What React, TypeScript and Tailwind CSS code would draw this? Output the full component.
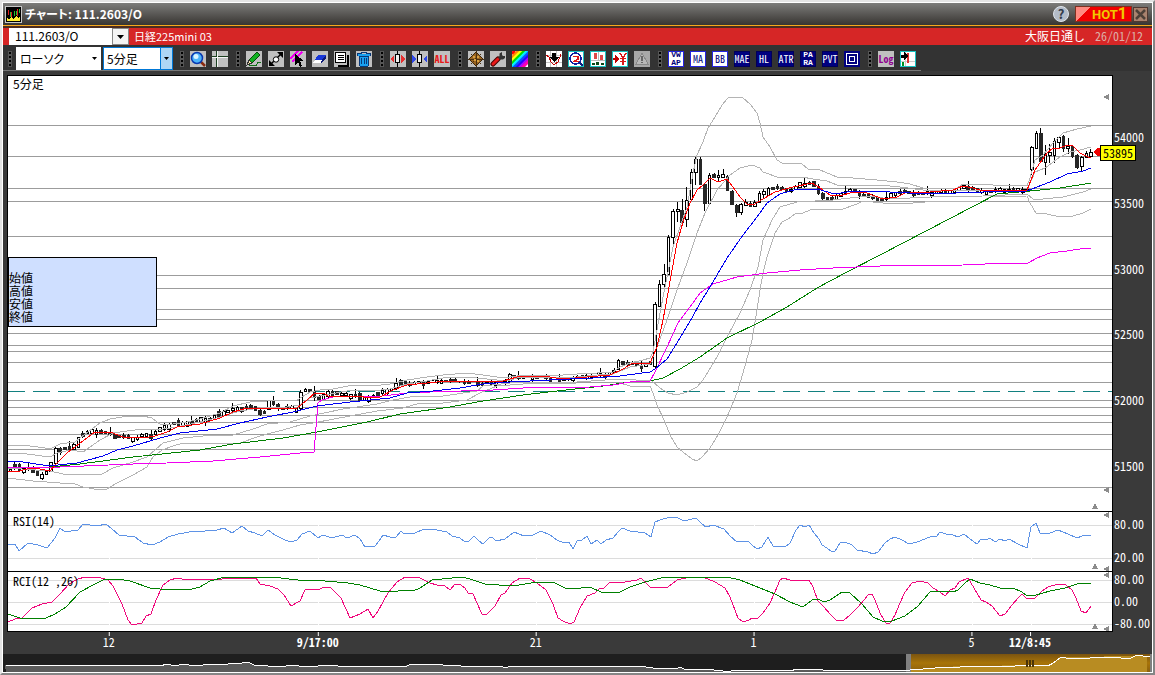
import type { ReactNode } from "react";

const GRID_LEVELS = [125, 156, 188, 201, 236, 275, 288, 309, 319, 333, 345, 351, 362, 382, 400, 407, 415, 422, 434, 449, 487];

const BAND_UPPER_2 =
  "8,445 23,445 45,448 52,448 60,444 67,443 75,442 80,438 88,432 100,423 110,419 122,417 143,416 152,418 160,424 173,424 187,422 200,419 220,413 233,406 250,402 267,401 283,400 297,400 302,397 310,392 320,390 333,389 353,385 373,386 390,384 407,380 427,377 443,375 467,373 483,375 497,377 510,377 517,376 543,375 563,375 577,374 597,373 613,372 620,367 630,363 643,360 650,358 653,352 660,313 665,287 673,247 680,227 687,207 693,173 697,155 703,142 708,128 715,117 722,105 728,98 735,97 743,98 750,104 757,113 760,123 763,137 770,147 777,160 782,163 802,164 808,169 820,170 837,177 853,178 877,180 897,182 910,184 923,188 957,188 963,184 993,185 1027,186 1030,178 1035,160 1043,155 1053,143 1063,133 1077,129 1091,126";
const BAND_UPPER_1 =
  "8,453 27,454 50,457 57,453 70,450 83,452 100,440 113,433 127,431 143,429 163,429 177,427 200,422 220,417 240,411 260,408 287,407 300,405 310,398 330,394 353,390 373,391 390,389 407,384 427,381 443,378 467,377 497,380 510,380 517,378 543,377 577,377 597,375 613,374 620,371 630,367 650,364 657,347 667,320 677,290 687,263 697,233 705,213 717,190 730,175 740,168 752,165 760,168 763,172 777,177 802,177 813,179 827,181 837,185 880,185 900,187 923,190 957,190 1027,190 1035,172 1045,168 1060,157 1070,152 1080,150 1091,147";
const BAND_LOWER_1 =
  "8,468 50,471 63,474 102,474 113,468 133,462 147,457 155,450 163,443 183,438 203,436 233,435 253,429 267,424 290,422 310,416 343,409 377,404 393,400 410,397 443,396 477,391 483,386 510,383 577,382 620,379 652,381 660,388 668,393 677,395 687,392 697,387 703,380 717,357 727,337 740,313 750,290 758,267 763,240 772,220 780,207 797,202 833,200 850,198 870,196 890,199 930,197 983,196 1027,194 1033,199 1043,199 1063,197 1083,192 1091,189";
const BAND_LOWER_2 =
  "8,478 33,481 60,483 75,484 83,487 100,490 107,489 117,483 133,475 147,467 153,457 162,450 173,446 183,443 200,443 220,444 240,443 257,437 267,434 283,430 300,425 313,423 350,416 377,411 403,408 420,403 443,403 467,400 480,393 497,386 523,384 577,383 620,383 630,386 650,386 653,393 657,405 665,422 670,435 677,447 683,452 692,459 697,461 702,457 710,448 718,435 727,417 737,393 743,373 752,340 757,310 760,290 763,273 767,257 775,233 782,222 788,219 795,214 803,213 810,210 843,209 857,204 863,201 883,203 913,203 937,201 983,201 990,197 1027,196 1030,203 1036,213 1047,214 1060,217 1073,216 1083,213 1091,209";
const MA_MID =
  "8,461 23,462 43,465 58,465 77,463 103,456 117,450 133,446 160,438 180,433 217,429 240,423 267,417 293,412 317,406 350,402 390,398 407,393 433,391 460,388 483,384 510,382 570,379 593,378 620,376 650,372 655,369 667,359 680,338 692,318 700,303 710,287 727,258 743,235 757,217 767,203 780,194 797,189 817,189 835,194 853,191 880,191 890,192 930,194 983,192 1027,191 1037,187 1050,182 1067,174 1083,171 1091,168";
const MA_LONG =
  "8,467 50,467 80,464 133,457 200,450 233,444 283,438 317,432 367,422 400,414 450,407 483,401 523,395 557,391 603,386 630,382 650,381 663,378 680,369 700,357 727,338 760,322 787,307 817,288 847,272 880,255 997,194 1030,191 1060,188 1091,183";
const VWAP =
  "8,467 60,467 133,464 167,463 213,461 260,457 300,453 314,452 318,403 322,400 333,397 383,396 407,393 430,392 493,390 523,388 590,387 613,385 630,382 650,381 655,372 667,347 678,323 690,307 700,293 713,284 737,277 767,273 800,270 833,268 880,266 963,265 1008,263 1028,263 1037,258 1050,253 1067,251 1080,249 1091,248";
const MA_SHORT =
  "8,472 20,471 30,468 40,469 50,471 57,463 67,453 75,447 87,438 95,432 110,432 123,437 143,438 155,436 167,432 177,427 200,424 220,418 233,412 247,408 267,409 297,408 307,400 315,393 323,393 330,397 357,396 370,398 380,397 393,390 407,385 417,384 437,382 453,381 503,381 517,377 543,376 563,379 587,377 610,375 623,369 633,363 650,363 657,347 663,320 668,293 672,270 677,243 683,222 690,203 697,190 703,185 710,178 718,182 727,179 733,187 740,197 747,204 753,205 763,199 775,192 793,187 812,183 820,188 830,195 840,196 853,192 867,193 883,199 897,197 907,192 930,192 953,190 963,186 973,188 983,191 1027,190 1035,170 1047,153 1053,148 1060,148 1067,145 1073,146 1080,153 1088,157 1091,157";

const RSI_LINE =
  "8,544 15,544 19,551 28,543 38,545 47,548 55,538 60,528 65,532 78,530 83,524 97,526 106,524 112,529 119,535 135,537 143,543 152,545 160,542 168,537 178,534 195,531 205,531 217,530 224,528 232,533 242,526 248,531 255,533 262,536 268,530 275,535 285,540 291,542 297,540 302,534 310,531 318,538 323,535 332,538 342,535 347,538 355,535 360,539 365,547 375,546 379,541 383,535 390,537 396,537 401,531 404,534 415,533 424,529 437,530 447,532 452,536 460,538 465,542 469,541 474,536 479,541 483,544 489,538 492,537 496,541 505,539 514,532 524,536 533,535 541,531 550,535 557,540 564,543 569,542 573,549 577,541 582,540 587,536 591,544 597,540 601,544 606,540 613,538 619,531 622,528 630,531 645,533 651,537 655,522 660,520 670,517 678,518 684,521 696,518 702,524 706,527 713,525 724,529 730,536 737,542 742,541 748,541 752,545 757,549 762,547 768,537 773,546 785,547 790,543 796,530 800,525 805,527 809,525 814,533 819,539 822,545 827,548 831,551 835,551 840,543 845,542 852,545 857,550 868,552 873,554 878,552 885,543 890,539 895,537 902,540 909,544 917,542 925,539 932,536 936,537 940,532 946,534 953,535 958,537 964,534 970,539 977,544 981,539 986,540 990,538 995,542 1000,539 1005,541 1009,539 1018,544 1027,548 1031,527 1036,523 1040,533 1050,533 1058,530 1068,534 1077,538 1082,536 1091,535";
const RCI_SHORT =
  "8,622 15,619 22,618 32,608 42,604 52,602 60,594 69,584 78,579 85,577 98,577 108,580 113,586 122,604 128,620 132,625 142,623 146,616 151,614 156,600 163,585 170,580 177,578 182,579 222,579 250,578 256,578 260,584 270,586 278,589 284,595 291,606 300,601 305,590 310,589 320,589 324,587 331,588 341,598 350,618 360,614 368,609 373,618 378,611 388,593 397,582 405,577 420,578 430,583 437,585 445,586 450,590 455,584 461,585 465,588 468,593 473,594 477,603 482,614 487,614 495,606 501,595 505,593 512,583 520,578 530,579 537,583 546,590 553,604 558,618 563,621 570,624 574,622 580,608 587,596 595,593 599,589 604,588 610,582 625,582 637,580 641,578 646,583 650,587 668,587 677,580 690,577 703,577 715,582 725,588 730,597 738,618 743,622 749,620 752,618 758,618 763,613 770,603 775,592 780,580 783,578 790,580 809,580 813,587 818,601 824,607 830,614 836,620 844,620 850,615 858,607 865,599 868,595 872,594 875,600 880,613 886,623 890,623 895,615 900,603 905,592 912,583 920,581 928,583 933,588 940,592 945,596 950,590 955,588 959,582 968,578 974,588 981,600 986,602 992,606 1000,616 1005,614 1012,605 1018,598 1022,594 1027,599 1035,598 1042,591 1048,587 1058,584 1066,585 1072,590 1076,598 1081,611 1086,613 1091,606";
const RCI_LONG =
  "8,614 20,618 44,619 55,614 66,607 80,592 95,584 105,579 118,579 130,581 150,588 160,589 192,589 200,587 210,581 225,577 272,577 298,580 325,581 348,583 360,585 380,591 398,591 405,590 413,591 420,588 432,580 462,577 470,579 485,584 513,586 525,584 537,582 553,582 565,588 573,589 590,587 603,593 620,592 630,587 645,582 665,577 727,577 740,580 760,588 775,594 790,602 803,607 812,600 818,599 824,602 830,600 842,592 850,593 862,604 873,617 882,621 892,621 905,616 918,606 930,592 935,591 953,592 958,590 965,583 970,579 980,583 990,585 1000,588 1013,588 1022,592 1027,596 1036,595 1050,591 1065,588 1080,583 1091,583";
const NAV_LINE =
  "5,665 160,665 166,664 175,665 182,664 195,665 210,664 220,664 235,663 248,662 255,665 280,666 292,665 305,666 330,665 345,666 405,666 410,664 435,664 450,665 470,666 500,666 505,667 510,666 640,666 650,667 655,668 675,668 680,667 685,669 710,669 716,670 728,671 733,670 790,670 796,669 820,669 825,670 905,670 915,669 930,668 940,667 955,667 965,666 990,666 1040,665 1048,665 1052,663 1060,657 1070,658 1110,657 1130,658 1135,655 1150,656";

/* Typical price path for the quiet stretches: [x, y]. */
const QUIET_PATH: [number, number][] = [
  [10, 469], [15, 466], [20, 470], [25, 467], [32, 471], [38, 475], [42, 474], [48, 470], [52, 462], [56, 449], [62, 447], [70, 449],
  [75, 445], [79, 436], [85, 432], [90, 433], [95, 428], [100, 433], [112, 434], [120, 437], [130, 438], [140, 436], [150, 435],
  [157, 430], [165, 427], [173, 421], [180, 426], [187, 421], [195, 422], [203, 418], [212, 419], [218, 414], [226, 410], [235, 410],
  [243, 406], [250, 407], [258, 411], [264, 412], [268, 402], [274, 404], [281, 408], [297, 408], [301, 391], [312, 391], [318, 400],
  [325, 395], [333, 391], [338, 395], [355, 394], [360, 400], [366, 398], [374, 395], [380, 393], [388, 389], [393, 388], [401, 381],
  [410, 384], [420, 382], [448, 380], [480, 383], [505, 382], [509, 375], [520, 377], [540, 376], [555, 380], [570, 379], [585, 375],
  [605, 374], [614, 371], [618, 361], [625, 362], [632, 364], [640, 365], [650, 363], [769, 187], [782, 188], [787, 190], [795, 188],
  [800, 183], [812, 182], [816, 190], [822, 197], [832, 199], [842, 192], [850, 190], [860, 194], [870, 197], [885, 199], [893, 193],
  [900, 191], [920, 193], [940, 191], [955, 190], [963, 186], [970, 187], [977, 192], [985, 191], [1000, 189], [1028, 189],
];

/* Candles of the busy stretches: [high, bodyTop, bodyBottom, low, falling]. */
type Bar = [number, number, number, number, 0 | 1];
const RALLY: Bar[] = [
  [302, 304, 366, 369, 0], [280, 284, 306, 307, 0], [264, 274, 284, 288, 0], [235, 237, 274, 275, 0], [209, 211, 237, 247, 0],
  [202, 209, 211, 222, 0], [199, 210, 222, 225, 1], [187, 200, 219, 227, 0], [169, 172, 199, 200, 0], [157, 159, 172, 185, 0],
  [157, 159, 184, 185, 1], [184, 184, 203, 211, 1], [173, 175, 203, 204, 0], [173, 174, 177, 178, 1], [170, 175, 177, 182, 0],
  [169, 174, 177, 178, 0], [175, 176, 190, 191, 1], [190, 191, 204, 205, 1], [204, 205, 212, 217, 1], [203, 204, 212, 215, 0],
  [199, 202, 205, 206, 0], [201, 203, 206, 207, 1], [200, 202, 206, 207, 0], [191, 193, 202, 203, 0], [189, 191, 194, 198, 0],
];
const LATEST: Bar[] = [
  [146, 147, 169, 175, 0], [131, 133, 148, 149, 0], [128, 133, 161, 163, 1], [145, 153, 162, 175, 0], [144, 152, 155, 163, 0],
  [138, 141, 155, 163, 0], [136, 137, 142, 149, 0], [135, 136, 148, 152, 1], [138, 146, 148, 154, 0], [145, 146, 156, 158, 1],
  [154, 155, 167, 169, 1], [156, 157, 166, 171, 0], [151, 153, 157, 158, 0], [149, 152, 156, 157, 0],
];

const centerOf = (i: number) => 655 + 4.54 * (i - 142);

function quietLevel(x: number) {
  const next = QUIET_PATH.findIndex((p) => p[0] >= x);
  if (next <= 0) return QUIET_PATH[0][1];
  const [x0, y0] = QUIET_PATH[next - 1];
  const [x1, y1] = QUIET_PATH[next];
  return y0 + ((y1 - y0) * (x - x0)) / (x1 - x0);
}

function barAt(i: number): Bar {
  if (i >= 142 && i < 142 + RALLY.length) return RALLY[i - 142];
  if (i >= 225) return LATEST[i - 225];
  const x = centerOf(i);
  const from = quietLevel(x - 4);
  const to = quietLevel(x);
  const spread = x > 400 ? 1 : 2;
  const wobble = (i * 7) % 4;
  const flat = x > 430 && x < 600 && i % 3 === 0;
  const top = Math.round(Math.min(from, to)) - (wobble > 1 ? spread : 0);
  const bottom = flat ? top : Math.max(Math.round(Math.max(from, to)), top + 2) + (wobble === 1 ? spread : 0);
  return [top - ((i * 5) % 3) - (i % 9 === 4 ? 3 : 0), top, bottom, bottom + ((i * 11) % 3) + (i % 8 === 3 ? 2 : 0), to > from || i % 5 === 1 ? 1 : 0];
}

const CANDLES = Array.from({ length: 239 }, (_, i) => {
  const center = centerOf(i);
  const left = Math.round(center - 1.8);
  return { wick: Math.floor(center), left, width: Math.round(center + 1.8) - left, bar: barAt(i) };
});

function Candles() {
  return (
    <g>
      {CANDLES.map(({ wick, left, width, bar: [high, top, bottom, low, falling] }) => (
        <g key={left}>
          <rect x={wick} y={high} width={1} height={Math.max(1, low - high)} fill="#000" />
          <rect x={left} y={top} width={width} height={bottom - top + 1} fill={falling ? "#262626" : "#000"} />
          {!falling && bottom - top > 1 && <rect x={left + 1} y={top + 1} width={width - 2} height={bottom - top - 1} fill="#fff" />}
        </g>
      ))}
    </g>
  );
}

function Curve({ points, color }: { points: string; color: string }) {
  return <polyline points={points} fill="none" stroke={color} strokeWidth={1} />;
}

function Marks({ left, up }: { left: number[]; up: number[] }) {
  return (
    <g fill="#8c8c8c">
      {left.map((y) => <path key={y} d={`M1103 ${y} l6 -3 v6z`} />)}
      {up.map((y) => <path key={y} d={`M1095 ${y - 3} l3 6 h-6z`} />)}
    </g>
  );
}

function Plot({ top, height, label, children }: { top: number; height: number; label: string; children: ReactNode }) {
  return (
    <svg
      role="img"
      aria-label={label}
      viewBox={`8 ${top} 1104 ${height}`}
      preserveAspectRatio="none"
      shapeRendering="crispEdges"
      className="block h-full w-full"
    >
      {children}
    </svg>
  );
}

const TICKS = [109, 318, 536, 754, 972, 1031];

function SubGrid({ levels, top, bottom }: { levels: number[]; top: number; bottom: number }) {
  return (
    <g>
      {levels.map((y) => <rect key={y} x={8} y={y} width={1104} height={1} fill="#dcdcdc" />)}
      {TICKS.map((x) => <rect key={x} x={x} y={top} width={1} height={bottom - top} fill="#fff" />)}
    </g>
  );
}

const iconBox = "mt-px flex size-4 shrink-0 items-center justify-center overflow-hidden";

function Tool({ label, tone = "bg-[#c0c0c0]", children }: { label: string; tone?: string; children: ReactNode }) {
  return (
    <button type="button" aria-label={label} className={`${iconBox} ${tone}`}>
      <svg viewBox="0 0 16 16" className="size-4 shrink-0" shapeRendering="crispEdges" aria-hidden="true">{children}</svg>
    </button>
  );
}

const light = "bg-white text-[#00007a] shadow-[inset_0_0_0_1px_#2424e0]";
const navy = "bg-[#000080] text-white shadow-[inset_0_0_0_1px_#000058]";
const cyan = "bg-white shadow-[inset_0_0_0_1px_#18c4c4]";

function TextTool({ lines, tone }: { lines: string[]; tone: string }) {
  const font =
    lines.length > 1
      ? 'font-["Liberation_Mono",monospace] text-[8px] font-bold leading-[8px]'
      : 'font-["Noto_Sans_Mono_CJK_JP","Liberation_Mono",monospace] text-[10px] leading-[16px]';
  return (
    <button type="button" className={`${iconBox} flex-col ${font} ${tone}`}>
      {lines.map((line) => <span key={line}>{line}</span>)}
    </button>
  );
}

function Grip() {
  return (
    <span className="ml-[3px] flex w-[3px] shrink-0 flex-col gap-[2px]" aria-hidden="true">
      {[0, 1, 2, 3].map((n) => <span key={n} className="size-[2px] bg-black outline outline-[#555]" />)}
    </span>
  );
}

function BarIcon({ color, inward }: { color: string; inward?: boolean }) {
  return (
    <g>
      <path d="M7.500 0v16" stroke="#000" />
      <rect x="5.500" y="3.500" width="4" height="8" fill="#f0f0f0" stroke="#000" />
      <path d={inward ? "M0 4l4 4l-4 4zM15 4l-4 4l4 4z" : "M4 4v8L0 8zM11 4v8l4-4z"} fill={color} />
    </g>
  );
}

function Toolbar() {
  return (
    <div role="toolbar" aria-label="チャートツール" className="flex h-[26px] items-center">
      <div className="flex h-[26px] items-center gap-[6px] border-b border-[#777] pl-[3px] pr-[5px] pt-[2px]">
        <Grip />
        <div className="-ml-[2px] -mr-px flex gap-[2px]">
          <div className="relative">
            <select aria-label="チャート種別" className="block h-[23px] w-[85px] appearance-none bg-white pl-1 text-[12px] text-black [font-feature-settings:'palt']">
              <option>ローソク</option>
            </select>
            <svg viewBox="0 0 5 3" className="pointer-events-none absolute right-1 top-[10px] h-[3px] w-[5px]" aria-hidden="true"><path d="M0 0h5L2.500 3z" /></svg>
          </div>
          <div className="relative">
            <select aria-label="足種" className="block h-[23px] w-[70px] appearance-none border border-[#0078d7] bg-white pl-[3px] text-[12px] text-black">
              <option>5分足</option>
            </select>
            <span className="pointer-events-none absolute right-0 top-0 flex h-[23px] w-[13px] items-center justify-center border border-[#0078d7] bg-[#add6f5]">
              <svg viewBox="0 0 5 3" className="h-[3px] w-[5px]" aria-hidden="true"><path d="M0 0h5L2.500 3z" /></svg>
            </span>
          </div>
        </div>
        <Grip />
        <Tool label="拡大">
          <g shapeRendering="auto">
            <path d="M10.500 10.500l4.500 4.500" stroke="#8a2a10" strokeWidth="2.500" />
            <circle cx="7" cy="7" r="5.500" fill="#4cb4fa" stroke="#0838b0" strokeWidth="1.500" />
            <circle cx="6" cy="5.500" r="2.500" fill="#d8f4ff" />
          </g>
        </Tool>
        <Tool label="十字線">
          <path d="M0 5.500h16M4.500 0v16" stroke="#1c4020" />
          <path d="M0 6.500h16M5.500 0v16" stroke="#f4f4f4" />
        </Tool>
        <Grip />
        <Tool label="ペン">
          <path d="M3 9l8-8l3 3l-8 8z" fill="#10b020" stroke="#064a0a" />
          <path d="M1 14l2-5l3 3z" fill="#ffe8b0" stroke="#333" />
          <path d="M3 14.500h7l2-3h3" fill="none" stroke="#107018" />
        </Tool>
        <Tool label="トレンドライン">
          <g shapeRendering="auto">
            <path d="M3 13L13 3" stroke="#000" strokeWidth="1.500" />
            <path d="M1 9v6h6zM9 1h6v6z" />
            <circle cx="8" cy="8.500" r="2.700" fill="#fff" stroke="#000" />
          </g>
        </Tool>
        <Tool label="平行線">
          <path d="M0 8L8 0M2 11L12 1" stroke="#f000f0" strokeWidth="1.500" />
          <path d="M5 3v11l3-3l2 5l2-1l-2-5h4z" fill="#000" />
        </Tool>
        <Tool label="消しゴム">
          <path d="M6 4h8l-4 5H3z" fill="#1838d8" />
          <path d="M3 9h7l-1 3H1z" fill="#fff" />
          <path d="M10 9l4-5v4l-5 4z" fill="#0a1878" />
        </Tool>
        <Tool label="複製">
          <path d="M13.500 4v10.500H4" fill="none" stroke="#000" strokeWidth="2" />
          <rect x="1.500" y="1.500" width="10" height="10" fill="#fff" stroke="#000" />
          <path d="M4 4.500h6M4 6.500h6M4 8.500h6" stroke="#000" />
        </Tool>
        <Tool label="削除">
          <path d="M3 5h10l-1 10H4z" fill="#18a0f0" stroke="#083878" />
          <path d="M2 3.500h12" stroke="#18a0f0" strokeWidth="2" />
          <path d="M1.500 5v-2.500h4v-1h5v1h4V5" fill="none" stroke="#083878" />
          <path d="M5.500 7v6M8 7v6M10.500 7v6" stroke="#083878" />
        </Tool>
        <Grip />
        <Tool label="間隔を広げる"><BarIcon color="#e83030" /></Tool>
        <Tool label="間隔を狭める"><BarIcon color="#3048e8" inward /></Tool>
        <TextTool lines={["ALL"]} tone="bg-[#c0c0c0] font-bold text-[#e81818]" />
        <Grip />
        <Tool label="設定">
          <path d="M8 1l7 7l-7 7l-7-7z" fill="#9a6420" stroke="#3c2408" />
          <path d="M3 3l10 10M13 3L3 13M8 0v16M0 8h16" stroke="#4a3010" />
          <path d="M6 8h2v2H6zM9 5h2v2H9zM5 5h2v2H5zM9 9h2v2H9z" fill="#d8a040" />
        </Tool>
        <Tool label="ツール設定">
          <g shapeRendering="auto">
            <path d="M3 13l5-5" stroke="#400" strokeWidth="5" strokeLinecap="round" />
            <path d="M3 13l5-5" stroke="#e81818" strokeWidth="3" strokeLinecap="round" />
            <path d="M8 7l1.500-2V2.500L12 1v3l1 1h2v2l-2 1.500h-3z" fill="#333" />
          </g>
        </Tool>
        <Tool label="配色" tone="bg-white">
          <g shapeRendering="auto" strokeWidth="2.500">
            <path d="M0 3L3 0" stroke="#f00" strokeWidth="4" />
            <path d="M-1 7L7-1" stroke="#f80" />
            <path d="M-1 10L10-1" stroke="#ff0" />
            <path d="M-1 13L13-1" stroke="#0d0" />
            <path d="M-1 16L16-1" stroke="#0ef" />
            <path d="M1 17L17 1" stroke="#05f" />
            <path d="M4 17L17 4" stroke="#20f" />
            <path d="M7 17L17 7" stroke="#a0f" />
            <path d="M10 17l7-7" stroke="#f0a" strokeWidth="3" />
          </g>
        </Tool>
        <Grip />
        <Tool label="売買サイン" tone="bg-white">
          <path d="M4.500 0v16M10.500 0v16M0 4.500h16M0 11.500h16" stroke="#c4c4c4" />
          <path d="M0 4l3 2l2 5l3 3l4-3l3-8" fill="none" stroke="#c00000" />
          <path d="M6 2h4v4h3l-4.500 5L4 6h2z" />
        </Tool>
        <Tool label="チャート検索" tone={cyan}>
          <path d="M11 11l4 4" stroke="#102080" strokeWidth="2" />
          <circle cx="7.500" cy="7.500" r="5.500" fill="#fff" stroke="#1020a0" strokeWidth="1.500" />
          <path d="M5 5.500h5v2.500L6 10.500h5" fill="none" stroke="#e01818" strokeWidth="1.500" />
        </Tool>
        <Tool label="比較チャート" tone={cyan}>
          <path d="M4 2h3v6H4zM10 4h3v5h-3z" fill="#e04848" />
          <path d="M8.500 1v8M1 9.500h14" stroke="#bbb" />
          <path d="M2 12h3v2H2zM6 11h3v3H6zM11 12h3v2h-3z" fill="#084818" />
        </Tool>
        <Tool label="注文" tone={cyan}>
          <path d="M1 7h2V4l4 4l-4 4V9H1z" fill="#c00000" />
          <path d="M8 2l3 5l3-5M8 7.500h6M8 10.500h6M11 7v7" fill="none" stroke="#d81818" strokeWidth="1.500" />
        </Tool>
        <Tool label="アラート" tone="bg-[#a8a8a8]">
          <path d="M8 2l6 11H2z" fill="#b8b8b8" stroke="#888" />
          <path d="M8 5v5M8 11v1" stroke="#666" strokeWidth="1.500" />
        </Tool>
        <Grip />
        <TextTool lines={["VW", "AP"]} tone={light} />
        <TextTool lines={["MA"]} tone={light} />
        <TextTool lines={["BB"]} tone={light} />
        <TextTool lines={["MAE"]} tone={navy} />
        <TextTool lines={["HL"]} tone={navy} />
        <TextTool lines={["ATR"]} tone={navy} />
        <TextTool lines={["PA", "RA"]} tone={navy} />
        <TextTool lines={["PVT"]} tone={navy} />
        <Tool label="価格帯" tone="bg-[#000080]">
          <path d="M2.500 2.500h11v11h-11zM5.500 5.500h5v5h-5z" fill="none" stroke="#fff" />
        </Tool>
        <Grip />
        <TextTool lines={["Log"]} tone="bg-[#c0c0c0] font-bold text-[#900090]" />
        <Tool label="自動スクロール" tone={cyan}>
          <path d="M1 10.500h14M5.500 1v14" stroke="#ccc" />
          <path d="M7.500 2v10" stroke="#e03030" strokeWidth="2" />
          <path d="M1 4h3V1l5 4l-5 4V7H1z" />
          <path d="M2 11h2v4H2z" fill="#009020" />
        </Tool>
      </div>
    </div>
  );
}

const TIME_LABELS = [
  { at: "9.2%", text: "12", bold: false },
  { at: "28.1%", text: "9/17:00", bold: true },
  { at: "47.8%", text: "21", bold: false },
  { at: "67.5%", text: "1", bold: false },
  { at: "87.2%", text: "5", bold: false },
  { at: "92.5%", text: "12/8:45", bold: true },
];

const mono = 'font-["Noto_Sans_Mono_CJK_JP","Noto_Sans_CJK_JP",monospace]';

export default function App() {
  return (
    <div className='flex min-h-screen flex-col border-2 border-b-[#858585] border-l-[#e4e4e4] border-r-[#858585] border-t-[#e4e4e4] font-["Noto_Sans_CJK_JP",sans-serif] text-[12px] leading-[14px]'>
      <div className="flex flex-1 flex-col border border-white bg-[#333]">
        <header className="flex h-[22px] items-center gap-[3px] bg-gradient-to-b from-[#7d7d7b] to-[#383532] pl-[2px] pr-1">
          <svg viewBox="0 0 17 17" className="size-[17px]" shapeRendering="crispEdges" aria-hidden="true">
            <rect x=".5" y=".5" width="16" height="16" fill="#000" stroke="#c8c8c8" />
            <path d="M3.500 4v5M6.500 6v6M12.500 3v7" stroke="#e02020" />
            <path d="M5.500 6v5M9.500 5v5M11.500 5v4M14.500 3v4" stroke="#20c030" />
            <path d="M2 15v-3l2 1l2-2l2 2l3-3l2 2l2-1v4z" fill="#ffee30" />
          </svg>
          <h1 className="text-[12px] font-bold text-white [font-feature-settings:'palt']">チャート: 111.2603/O</h1>
          <button type="button" aria-label="ヘルプ" className="ml-auto flex size-4 items-center justify-center rounded-full border border-[#dfe4ea] bg-[#b4bcc8] text-[13px] font-bold text-[#333b4a]">?</button>
          <button type="button" className="ml-[3px] h-4 w-[57px] border border-[#803020] bg-[linear-gradient(135deg,#ff8a80_0_10px,#f00000_10px)] pl-[12px] font-['Roboto',sans-serif] text-[13px] font-bold leading-[14px] text-[#f0c800]">HOT<span className="text-[16px]">1</span></button>
          <button type="button" aria-label="閉じる" className="-ml-[2px] flex size-[15px] items-center justify-center border border-[#503830] bg-[#a8826e]">
            <svg viewBox="0 0 11 11" className="size-[11px]" aria-hidden="true"><path d="M1 1l9 9M10 1l-9 9" stroke="#4c4038" strokeWidth="2.500" /></svg>
          </button>
        </header>
        <div className="h-[3px] border-b-2 border-t border-b-[#4c2c20] border-t-[#f5a81c]" />

        <div className="flex h-[17px] items-center bg-[#d62626] pl-[6px] pr-[9px] text-white">
          <input aria-label="銘柄コード" defaultValue="111.2603/O" className="h-[17px] w-[103px] bg-white pb-[2px] pl-[6px] text-[12px] text-black outline-none" />
          <button type="button" aria-label="銘柄を選択" className="flex h-[17px] w-[17px] items-center justify-center border border-[#888] bg-[#f4f4f4]">
            <svg viewBox="0 0 7 4" className="h-1 w-[7px]" aria-hidden="true"><path d="M0 0h7L3.500 4z" /></svg>
          </button>
          <span className="ml-[5px] pb-[2px] text-[11px]">日経225mini 03</span>
          <span className="ml-auto pb-[2px]">大阪日通し</span>
          <time className={`ml-[10px] pb-[2px] text-[#dcb0a8] ${mono}`}>26/01/12</time>
        </div>

        <Toolbar />

        <main className="grid flex-1 grid-cols-[minmax(0,1fr)_39px] grid-rows-[minmax(240px,1fr)_60px_61px_22px] bg-[#3a3a3a] pl-1 pt-1">
          <section className="relative border-l border-r border-t border-black bg-white">
            <div className="absolute inset-0">
              <Plot top={76} height={435} label="5分足 ローソクチャート">
                <line x1={8} x2={1112} y1={391.5} y2={391.5} stroke="#128080" strokeDasharray="17 8" />
                {GRID_LEVELS.map((y) => <rect key={y} x={8} y={y} width={1104} height={1} fill="#9c9c9c" />)}
                <Candles />
                <Curve points={BAND_UPPER_2} color="#b4b4b4" />
                <Curve points={BAND_UPPER_1} color="#b4b4b4" />
                <Curve points={BAND_LOWER_1} color="#b4b4b4" />
                <Curve points={BAND_LOWER_2} color="#b4b4b4" />
                <Curve points={MA_LONG} color="#008000" />
                <Curve points={VWAP} color="#f000f0" />
                <Curve points={MA_SHORT} color="#ff0000" />
                <Curve points={MA_MID} color="#0000f0" />
                <path d="M1093 152l4-4h3v8h-3z" fill="#f00000" />
                <Marks left={[97, 490]} up={[506]} />
              </Plot>
            </div>
            <p className="relative w-fit pl-[5px] pt-px">5分足</p>
            <dl className="absolute left-0 top-[181px] h-[70px] w-[149px] border border-black bg-[#cfdfff] pt-[13px] leading-[13px]">
              <dt>始値</dt>
              <dt>高値</dt>
              <dt>安値</dt>
              <dt>終値</dt>
            </dl>
            <output className={`absolute -right-[24px] top-[69px] h-4 border border-black bg-[#ffff00] px-[2px] leading-[14px] text-black ${mono}`}>53895</output>
          </section>
          <div className={`flex flex-col justify-between pb-[38px] pl-[1px] pt-[55px] text-white ${mono}`}>
            <span>54000</span><span>53500</span><span>53000</span><span>52500</span><span>52000</span><span>51500</span>
          </div>

          <section className="relative border-l border-r border-t border-black bg-white">
            <div className="absolute inset-0">
              <Plot top={512} height={59} label="RSI">
                <SubGrid levels={[525, 558]} top={512} bottom={571} />
                <Curve points={RSI_LINE} color="#5f93e6" />
                <Marks left={[515, 569]} up={[566]} />
              </Plot>
            </div>
            <p className={`relative w-fit pl-[5px] pt-[2px] ${mono}`}>RSI(14)</p>
          </section>
          <div className={`flex flex-col justify-between pb-[7px] pl-[1px] pt-[6px] text-white ${mono}`}>
            <span>80.00</span><span>20.00</span>
          </div>

          <section className="relative border border-black bg-white">
            <div className="absolute inset-0">
              <Plot top={572} height={59} label="RCI">
                <SubGrid levels={[580, 602, 624]} top={572} bottom={631} />
                <Curve points={RCI_SHORT} color="#f0087c" />
                <Curve points={RCI_LONG} color="#008000" />
                <Marks left={[575, 629]} up={[626]} />
              </Plot>
            </div>
            <p className={`relative w-fit pl-[5px] pt-[2px] ${mono}`}>RCI(12 ,26)</p>
          </section>
          <div className={`flex flex-col justify-between pb-[2px] pl-[1px] pt-[1px] text-white ${mono}`}>
            <span>80.00</span><span>0.00</span><span className="whitespace-nowrap">-80.00</span>
          </div>

          <svg className={`h-[22px] w-full text-[12px] ${mono}`} role="img" aria-label="時間軸">
            {TIME_LABELS.map(({ at, text, bold }) => (
              <g key={at} fill="#fff">
                <rect x={at} y={0} width={1} height={4} />
                <text x={at} y={15} textAnchor="middle" fontWeight={bold ? 700 : 400}>{text}</text>
              </g>
            ))}
          </svg>
        </main>

        <footer className="h-[18px]">
          <svg role="img" aria-label="表示範囲" viewBox="3 654 1149 18" preserveAspectRatio="none" shapeRendering="crispEdges" className="block h-full w-full">
            <defs>
              <linearGradient id="range" x1="0" x2="0" y1="0" y2="1">
                <stop offset="0" stopColor="#7a5410" />
                <stop offset=".5" stopColor="#a87408" />
                <stop offset="1" stopColor="#8a6010" />
              </linearGradient>
            </defs>
            <rect x={3} y={654} width={1149} height={18} fill="#1e1e1e" />
            <polygon points={`6,672 ${NAV_LINE} 1150,672`} fill="#5a5a5a" />
            <rect x={911} y={654} width={241} height={18} fill="url(#range)" />
            <polygon points="911,672 911,670 930,668 940,667 965,666 1040,665 1050,665 1060,657 1147,656 1147,672" fill="#b88c22" />
            <rect x={906} y={654} width={5} height={18} fill="#808080" />
            <rect x={1150} y={654} width={2} height={18} fill="#808080" />
            <polyline points={NAV_LINE} fill="none" stroke="#fff" transform="translate(0.5 0.5)" />
            <path d="M1026 660h2v7h-2zM1029 660h2v7h-2zM1032 660h2v7h-2z" fill="#4a3408" />
          </svg>
        </footer>
      </div>
    </div>
  );
}
